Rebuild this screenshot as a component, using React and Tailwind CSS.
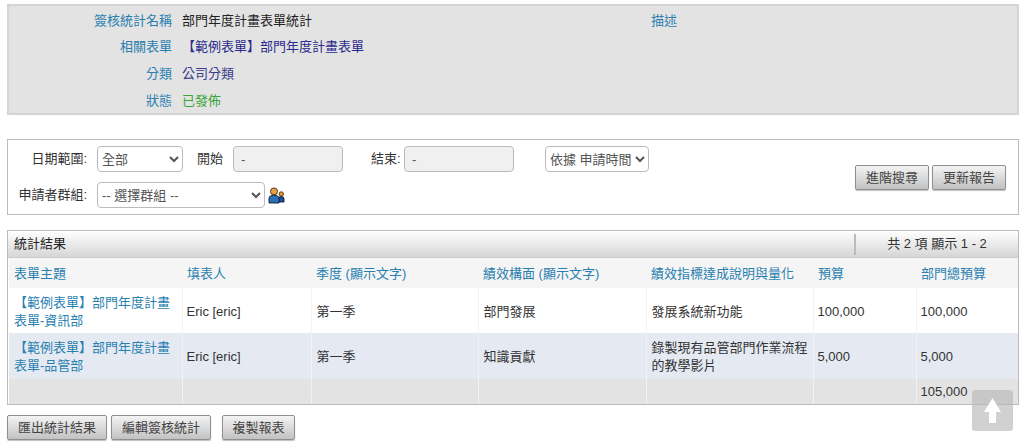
import React from 'react';

const font = "font-['Liberation_Sans','Noto_Sans_CJK_TC',sans-serif]";

const columns = [
    { title: '表單主題', width: 'w-[173px]' },
    { title: '填表人', width: 'w-[129px]' },
    { title: '季度 (顯示文字)', width: 'w-[167px]' },
    { title: '績效構面 (顯示文字)', width: 'w-[168px]' },
    { title: '績效指標達成說明與量化', width: 'w-[167px]' },
    { title: '預算', width: 'w-[103px]' },
    { title: '部門總預算', width: 'w-[103px]' },
];

const rows = [
    { dept: '資訊部', aspect: '部門發展', desc: '發展系統新功能', budget: '100,000', bg: 'bg-white', h: 'h-[45px]' },
    { dept: '品管部', aspect: '知識貢獻', desc: '錄製現有品管部門作業流程的教學影片', budget: '5,000', bg: 'bg-[#e5eaf2]', h: 'h-[46px]' },
];

function InfoRow({ label, children }) {
    return (
        <div className="flex items-center h-[26.7px]">
            <div className="w-[164px] text-right text-[#2a7fb0]">{label}</div>
            <div className="ml-[10px]">{children}</div>
        </div>
    );
}

function GrayButton({ children, className = '' }) {
    return (
        <button className={`h-[25px] rounded-[2px] border border-[#8f8f8f] bg-gradient-to-b from-[#f4f4f4] to-[#c2c2c2] text-[#444] text-[13px] shadow-[0_1px_1px_rgba(0,0,0,0.25)] ${className}`}>
            {children}
        </button>
    );
}

function GroupIcon() {
    return (
        <svg width="17" height="17" viewBox="0 0 17 17" className="ml-[3px]">
            <circle cx="13.3" cy="7" r="2.2" fill="#e89a30" stroke="#4a2c08" strokeWidth="0.9" />
            <path d="M10.5 15 V11.8 Q10.5 9.6 13.3 9.6 Q16 9.6 16 11.8 V15 Z" fill="#1c4f94" stroke="#0b1a33" strokeWidth="0.9" />
            <circle cx="6" cy="4.4" r="3.5" fill="#e8a048" stroke="#4a2c08" strokeWidth="0.9" />
            <path d="M1 16 V11.5 Q1 8.2 6 8.2 Q11 8.2 11 11.5 V16 Z" fill="#2f6fb8" stroke="#0b1a33" strokeWidth="0.9" />
        </svg>
    );
}

export default function App() {
    return (
        <div className={`relative w-[1024px] h-[446px] overflow-hidden bg-white pl-[7px] pr-[5px] pt-[4px] text-[13px] text-[#333] [text-spacing-trim:space-all] ${font}`}>
            <div className="flex h-[111px] border-2 border-[#d4d4d4] bg-[#e3e3e3] pt-[1px]">
                <div className="w-[643px] -ml-[1px]">
                    <InfoRow label="簽核統計名稱"><span className="text-[#222]">部門年度計畫表單統計</span></InfoRow>
                    <InfoRow label="相關表單"><span className="text-[#2b2b8c]">【範例表單】部門年度計畫表單</span></InfoRow>
                    <InfoRow label="分類"><span className="text-[#3a3a8c]">公司分類</span></InfoRow>
                    <InfoRow label="狀態"><span className="text-[#3aa63a]">已發佈</span></InfoRow>
                </div>
                <div className="h-[26.7px] flex items-center text-[#2a7fb0]">描述</div>
            </div>

            <div className="mt-[24px] flex h-[76px] items-start justify-between border border-[#bbb] pl-[9px] pr-[12px] pt-[6px]">
                <div className="flex flex-col gap-[10px]">
                    <div className="flex items-center h-[26px]">
                        <label className="w-[70px] text-right text-[#333]">日期範圍:</label>
                        <select className="ml-[10px] w-[86px] h-[26px] rounded-[4px] border border-[#bbb] bg-white text-[13px] text-[#555]">
                            <option>全部</option>
                        </select>
                        <span className="ml-[14px] w-[36px]">開始</span>
                        <input disabled value="-" className="w-[110px] h-[26px] rounded-[4px] border border-[#bbb] bg-[#f0f0f0] px-[7px] text-[13px] text-[#555]" />
                        <span className="ml-[28px] w-[33px]">結束:</span>
                        <input disabled value="-" className="w-[110px] h-[26px] rounded-[4px] border border-[#bbb] bg-[#f0f0f0] px-[7px] text-[13px] text-[#555]" />
                        <select className="ml-[31px] w-[104px] h-[26px] rounded-[4px] border border-[#bbb] bg-white text-[13px] text-[#555]">
                            <option>依據 申請時間</option>
                        </select>
                    </div>
                    <div className="flex items-center h-[26px]">
                        <label className="w-[70px] text-right">申請者群組:</label>
                        <select className="ml-[10px] w-[168px] h-[26px] rounded-[4px] border border-[#bbb] bg-white text-[13px] text-[#555]">
                            <option>-- 選擇群組 --</option>
                        </select>
                        <GroupIcon />
                    </div>
                </div>
                <div className="flex gap-[3px] mt-[19px]">
                    <GrayButton className="w-[74px]">進階搜尋</GrayButton>
                    <GrayButton className="w-[74px]">更新報告</GrayButton>
                </div>
            </div>

            <div className="mt-[15px] border border-[#bbb] h-[175px] overflow-hidden">
                <div className="flex h-[27px] items-center justify-between bg-gradient-to-b from-white to-[#d6d6d6] border-b border-[#ccc]">
                    <span className="ml-[6px] text-[#222]">統計結果</span>
                    <span className="flex h-[21px] w-[164px] items-center justify-center border-l-2 border-[#bbb] text-[#333]">共 2 項 顯示 1 - 2</span>
                </div>
                <table className="table-fixed border-collapse w-[1010px] ml-[1px]">
                    <thead>
                        <tr className="h-[30px] bg-[#f5f5f5]">
                            {columns.map(c => (
                                <th key={c.title} className={`${c.width} px-[5px] pt-[2px] text-left font-normal text-[#2a7fb0]`}>{c.title}</th>
                            ))}
                        </tr>
                    </thead>
                    <tbody>
                        {rows.map(r => (
                            <tr key={r.dept} className={`${r.h} ${r.bg}`}>
                                <td className="border-r border-[#f2f2f2] px-[5px] pt-[2px] leading-[18px] text-[#2a7fb0]">【範例表單】部門年度計畫表單-{r.dept}</td>
                                <td className="border-r border-[#f2f2f2] pl-[4px] pr-[5px] pt-[2px]">Eric [eric]</td>
                                <td className="border-r border-[#f2f2f2] px-[5px] pt-[2px]">第一季</td>
                                <td className="border-r border-[#f2f2f2] px-[5px] pt-[2px]">{r.aspect}</td>
                                <td className="border-r border-[#f2f2f2] px-[5px] pt-[2px] leading-[18px]">{r.desc}</td>
                                <td className="border-r border-[#f2f2f2] pl-[4px] pr-[5px] pt-[2px]">{r.budget}</td>
                                <td className="pl-[4px] pr-[5px] pt-[2px]">{r.budget}</td>
                            </tr>
                        ))}
                        <tr className="h-[25px] bg-[#e3e3e3]">
                            <td className="border-r border-[#f2f2f2]"></td>
                            <td className="border-r border-[#f2f2f2]"></td>
                            <td className="border-r border-[#f2f2f2]"></td>
                            <td className="border-r border-[#f2f2f2]"></td>
                            <td className="border-r border-[#f2f2f2]"></td>
                            <td className="border-r border-[#f2f2f2]"></td>
                            <td className="pl-[4px] pr-[5px]">105,000</td>
                        </tr>
                    </tbody>
                </table>
            </div>

            <div className="mt-[10px] flex">
                <GrayButton className="w-[100px]">匯出統計結果</GrayButton>
                <GrayButton className="ml-[4px] w-[100px]">編輯簽核統計</GrayButton>
                <GrayButton className="ml-[11px] w-[73px]">複製報表</GrayButton>
            </div>

            <div className="absolute left-[972px] top-[390px] flex h-[41px] w-[41px] items-center justify-center rounded-[3px] bg-[rgba(185,185,185,0.65)]">
                <svg width="17" height="25" viewBox="0 0 17 25">
                    <path d="M8.5 0 L17 14 H12 V25 H5 V14 H0 Z" fill="#fff" />
                </svg>
            </div>
        </div>
    );
}
